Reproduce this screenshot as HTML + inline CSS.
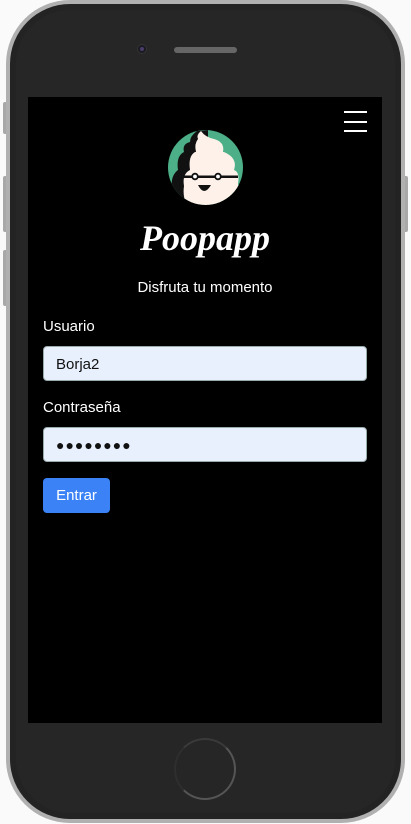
<!DOCTYPE html>
<html><head><style>
*{margin:0;padding:0;box-sizing:border-box}
body{width:411px;height:824px;background:#fafafa;position:relative;overflow:hidden;font-family:"Liberation Sans",sans-serif}
.btn{position:absolute;background:#a8a8a8;border-radius:2px}
.outer{position:absolute;left:6px;top:0;width:399px;height:823px;border-radius:64px;background:#b0b0b0}
.body{position:absolute;left:10px;top:4px;width:391px;height:815px;border-radius:60px;background:#232323}
.bezel{position:absolute;left:16px;top:10px;width:379px;height:803px;border-radius:54px;background:#262626}
.screen{position:absolute;left:28px;top:97px;width:354px;height:626px;background:#000;color:#fff}
.lbl{position:absolute;left:15px;font-size:15px;color:#fff}
.inp{position:absolute;left:15px;width:324px;height:35px;background:#e8f0fe;border:1px solid #9aa;border-radius:4px;color:#111;font-size:15px;padding:9px 12px}
</style></head><body>
<div class="btn" style="left:3px;top:102px;width:5px;height:32px"></div>
<div class="btn" style="left:3px;top:176px;width:5px;height:56px"></div>
<div class="btn" style="left:3px;top:250px;width:5px;height:56px"></div>
<div class="btn" style="left:403px;top:176px;width:5px;height:56px"></div>
<div class="outer"></div><div class="body"></div><div class="bezel"></div>
<div style="position:absolute;left:137px;top:44px;width:10px;height:10px;border-radius:50%;background:#1a1a22;border:1px solid #333"><div style="margin:2px;width:4px;height:4px;border-radius:50%;background:#4a3d6a"></div></div>
<div style="position:absolute;left:174px;top:47px;width:63px;height:6px;border-radius:3px;background:#666"></div>
<div style="position:absolute;left:174px;top:738px;width:62px;height:62px;border-radius:50%;border:2px solid #555;border-left-color:#2e2e2e;border-top-color:#3a3a3a"></div>
<div class="screen">
 <div style="position:absolute;left:316px;top:14px;width:23px">
  <div style="height:2px;background:#fff;margin-bottom:7.5px"></div><div style="height:2px;background:#fff;margin-bottom:7.5px"></div><div style="height:2px;background:#fff"></div></div>
 <svg style="position:absolute;left:140px;top:33px" width="75" height="75" viewBox="0 0 75 75">
  <defs><clipPath id="c"><circle cx="37.5" cy="37.5" r="37.5"/></clipPath></defs>
  <circle cx="37.5" cy="37.5" r="37.5" fill="#4caf87"/>
  <g clip-path="url(#c)">
   <path d="M29 1 Q22 6 22 12 Q14 14 16 22 Q8 26 10 40 Q2 46 4 60 Q4 72 10 80 L40 80 L40 0Z" fill="#111"/>
   <path d="M33 1 Q28 5 30 9 Q26 14 28 22 L55 22 Q57 12 46 9 Q37 7 33 1Z" fill="#fdf1ea"/>
   <path d="M27 22 Q20 26 22 40 L66 40 Q70 28 56 22Z" fill="#fdf1ea"/>
   <path d="M22 40 Q14 44 16 56 Q14 70 22 80 L64 80 Q74 66 70 54 Q72 42 66 40Z" fill="#fdf1ea"/>
   <rect x="16" y="45.5" width="54" height="2.5" fill="#111"/>
   <circle cx="27" cy="46.5" r="2.8" fill="#fff" stroke="#111" stroke-width="1.8"/>
   <circle cx="50" cy="46.5" r="2.8" fill="#fff" stroke="#111" stroke-width="1.8"/>
   <path d="M30 55 Q36 67 43 55 Z" fill="#111"/>
  </g>
 </svg>
 <div style="position:absolute;left:0;width:354px;top:120px;text-align:center;font-family:'Liberation Serif',serif;font-style:italic;font-weight:bold;font-size:36px">Poopapp</div>
 <div style="position:absolute;left:0;width:354px;top:182px;text-align:center;font-size:15px">Disfruta tu momento</div>
 <div class="lbl" style="top:221px">Usuario</div>
 <div class="inp" style="top:249px">Borja2</div>
 <div class="lbl" style="top:302px">Contraseña</div>
 <div class="inp" style="top:330px;font-size:14px;letter-spacing:1px">●●●●●●●●</div>
 <div style="position:absolute;left:15px;top:381px;width:67px;height:35px;background:#3b82f6;border-radius:4px;color:#fff;font-size:15px;text-align:center;line-height:35px">Entrar</div>
</div>
</body></html>
